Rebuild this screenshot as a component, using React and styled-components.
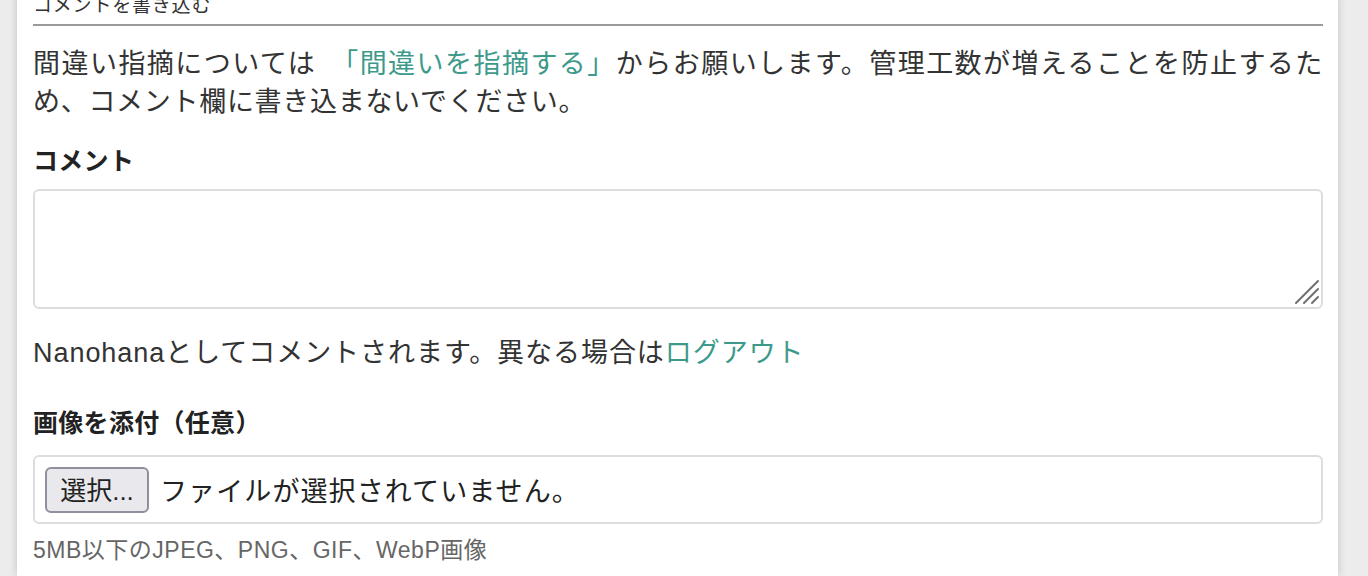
import React, { useState } from 'react';
import styled, { createGlobalStyle } from 'styled-components';

const GlobalStyle = createGlobalStyle`
    html, body {
        margin: 0;
        padding: 0;
        background: #ececec;
        overflow: hidden;
    }

    body {
        font-family: "Liberation Sans", "Noto Sans CJK JP", sans-serif;
        color: #333;
    }
`;

const Page = styled.div`
    display: flow-root;
    height: 576px;
    padding: 0 30px 0 17px;
`;

const Card = styled.div`
    background: #fff;
    height: calc(100% + 7px);
    margin-top: -7px;
    padding: 0 15px 0 16px;
    box-shadow: 0 0 8px rgba(0, 0, 0, 0.18);
`;

const SectionTitle = styled.h3`
    margin: 0;
    font-size: 19px;
    font-weight: normal;
    line-height: 26px;
    letter-spacing: 0.8px;
    padding-bottom: 5px;
    border-bottom: 2px solid #9a9a9a;
`;

const Notice = styled.p`
    margin: 19px 0 0;
    font-size: 27px;
    line-height: 38px;
    letter-spacing: 0.7px;
    text-align: justify;
`;

const Link = styled.a`
    color: #3d9a8b;
    text-decoration: none;
`;

const Label = styled.label`
    display: block;
    margin-top: ${(p) => p.$gap}px;
    font-size: 25px;
    font-weight: bold;
    line-height: 34px;
    letter-spacing: 0.3px;
    color: #222;
`;

const TextareaWrap = styled.div`
    position: relative;
    margin-top: 11px;
`;

const Textarea = styled.textarea`
    display: block;
    box-sizing: border-box;
    width: 100%;
    height: 120px;
    border: 2px solid #ddd;
    border-radius: 6px;
    padding: 8px 10px;
    font: inherit;
    font-size: 26px;
    resize: none;
    outline: none;
`;

const Grip = styled.svg`
    position: absolute;
    right: 3px;
    bottom: 4px;
    pointer-events: none;
`;

const Line = styled.p`
    margin: 25px 0 0;
    font-size: 27px;
    line-height: 38px;
    letter-spacing: 0.95px;
`;

const FileBox = styled.div`
    display: flex;
    align-items: center;
    gap: 11px;
    box-sizing: border-box;
    height: 69px;
    margin-top: 15px;
    padding: 0 10px;
    border: 2px solid #ddd;
    border-radius: 6px;
`;

const PickButton = styled.button`
    box-sizing: border-box;
    width: 104px;
    height: 46px;
    padding: 0 0 2px;
    background: #e9e9ed;
    border: 2px solid #8f8f9d;
    border-radius: 6px;
    font-family: inherit;
    font-size: 26px;
    color: #222;
`;

const FileName = styled.span`
    font-size: 27px;
    letter-spacing: 1.1px;
    color: #222;
`;

const Hint = styled.p`
    margin: 11px 0 0;
    font-size: 23px;
    line-height: 30px;
    letter-spacing: 0.5px;
    color: #666;
`;

const App = () => {
    const [comment, setComment] = useState('');

    return (
        <>
            <GlobalStyle />
            <Page>
                <Card>
                    <SectionTitle>コメントを書き込む</SectionTitle>
                    <Notice>
                        間違い指摘については　<Link href="#">「間違いを指摘する」</Link>からお願いします。管理工数が増えることを防止するため、コメント欄に書き込まないでください。
                    </Notice>

                    <Label $gap={23} htmlFor="comment">コメント</Label>
                    <TextareaWrap>
                        <Textarea
                            id="comment"
                            value={comment}
                            onChange={(e) => setComment(e.target.value)}
                        />
                        {/* safari style resize grip */}
                        <Grip width="26" height="26" viewBox="0 0 26 26">
                            <g stroke="#6f6f6f" strokeWidth="2" strokeLinecap="round">
                                <line x1="24" y1="2" x2="2" y2="24" />
                                <line x1="24" y1="10" x2="10" y2="24" />
                                <line x1="24" y1="18" x2="18" y2="24" />
                            </g>
                        </Grip>
                    </TextareaWrap>

                    <Line>
                        Nanohanaとしてコメントされます。異なる場合は<Link href="#">ログアウト</Link>
                    </Line>

                    <Label $gap={34}>画像を添付（任意）</Label>
                    <FileBox>
                        <PickButton type="button">選択...</PickButton>
                        <FileName>ファイルが選択されていません。</FileName>
                    </FileBox>
                    <Hint>5MB以下のJPEG、PNG、GIF、WebP画像</Hint>
                </Card>
            </Page>
        </>
    );
};

export default App;
